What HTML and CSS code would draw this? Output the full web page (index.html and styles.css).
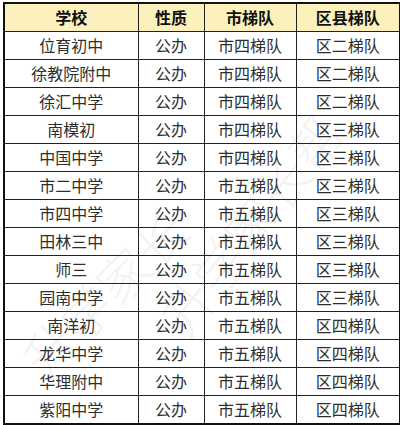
FILE: index.html
```html
<!DOCTYPE html>
<html lang="zh">
<head>
<meta charset="utf-8">
<link rel="stylesheet" href="styles.css">
</head>
<body>
<div class="wrap">
<div class="mark mark1">升学家长</div>
<div class="mark mark2">升学家长帮</div>
<table class="grid">
<colgroup><col class="c1"><col class="c2"><col class="c3"><col class="c4"></colgroup>
<thead>
<tr><th>学校</th><th>性质</th><th>市梯队</th><th>区县梯队</th></tr>
</thead>
<tbody>
<tr><td>位育初中</td><td>公办</td><td>市四梯队</td><td>区二梯队</td></tr>
<tr><td>徐教院附中</td><td>公办</td><td>市四梯队</td><td>区二梯队</td></tr>
<tr><td>徐汇中学</td><td>公办</td><td>市四梯队</td><td>区二梯队</td></tr>
<tr><td>南模初</td><td>公办</td><td>市四梯队</td><td>区三梯队</td></tr>
<tr><td>中国中学</td><td>公办</td><td>市四梯队</td><td>区三梯队</td></tr>
<tr><td>市二中学</td><td>公办</td><td>市五梯队</td><td>区三梯队</td></tr>
<tr><td>市四中学</td><td>公办</td><td>市五梯队</td><td>区三梯队</td></tr>
<tr><td>田林三中</td><td>公办</td><td>市五梯队</td><td>区三梯队</td></tr>
<tr><td>师三</td><td>公办</td><td>市五梯队</td><td>区三梯队</td></tr>
<tr><td>园南中学</td><td>公办</td><td>市五梯队</td><td>区三梯队</td></tr>
<tr><td>南洋初</td><td>公办</td><td>市五梯队</td><td>区四梯队</td></tr>
<tr><td>龙华中学</td><td>公办</td><td>市五梯队</td><td>区四梯队</td></tr>
<tr><td>华理附中</td><td>公办</td><td>市五梯队</td><td>区四梯队</td></tr>
<tr><td>紫阳中学</td><td>公办</td><td>市五梯队</td><td>区四梯队</td></tr>
</tbody>
</table>
</div>
</body>
</html>
```
FILE: styles.css
```css
html, body {
  margin: 0;
  padding: 0;
  background: #ffffff;
}
.wrap {
  position: relative;
  width: 400px;
  height: 425px;
  padding: 2px 0 0 3px;
  box-sizing: border-box;
}
.grid {
  position: relative;
  border-collapse: collapse;
  border: 2px solid #111;
  table-layout: fixed;
  width: 396px;
  font-family: "Noto Sans CJK SC", "Noto Sans", sans-serif;
  font-size: 16px;
}
.c1 { width: 134px; }
.c2 { width: 66px; }
.c3 { width: 92px; }
.c4 { width: 104px; }
.grid th, .grid td {
  border: 1px solid #222;
  height: 27px;
  padding: 0;
  text-align: center;
  line-height: 27px;
  white-space: nowrap;
}
.grid th {
  background: #fcf1bd;
  color: #111;
  font-weight: bold;
}
.grid td {
  color: #2e2e2e;
  font-weight: normal;
}
.mark {
  position: absolute;
  font-family: "Noto Sans CJK SC", sans-serif;
  font-size: 52px;
  line-height: 52px;
  font-weight: 300;
  color: rgba(0, 0, 0, 0.05);
  white-space: nowrap;
  transform-origin: left center;
  pointer-events: none;
}
.mark1 {
  left: 30px;
  top: 340px;
  transform: rotate(-45deg);
}
.mark2 {
  left: 170px;
  top: 300px;
  transform: rotate(-52deg);
}
```
